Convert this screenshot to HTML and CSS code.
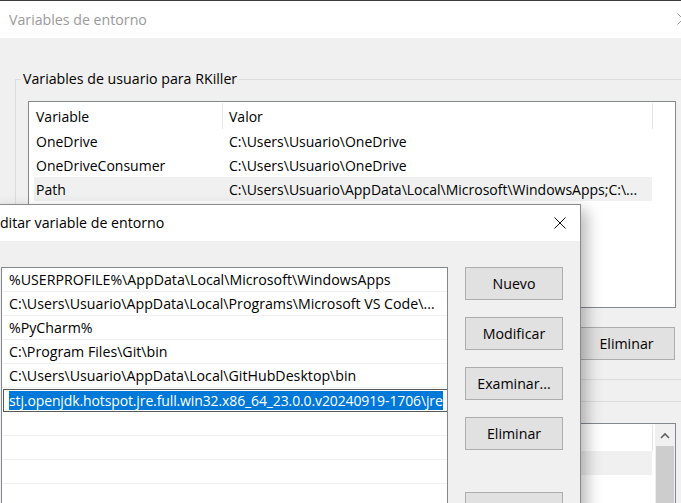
FILE: index.html
```html
<!DOCTYPE html>
<html lang="es">
<head>
<meta charset="utf-8">
<title>Variables de entorno</title>
<link rel="stylesheet" href="styles.css">
</head>
<body>
<div class="win">
  <div class="titlebar">
    <span class="title">Variables de entorno</span>
    <svg class="bg-close" width="12" height="12" viewBox="0 0 12 12"><path d="M0.5 0.5 L11.5 11.5 M11.5 0.5 L0.5 11.5" stroke="#9a9a9a" stroke-width="1" fill="none"/></svg>
  </div>
  <div class="win-body">
    <fieldset class="group">
      <legend>Variables de usuario para RKiller</legend>
      <div class="listview user-list">
        <div class="lv-header">
          <div class="hcell c1">Variable</div>
          <div class="hcell c2">Valor</div>
        </div>
        <div class="lv-row"><div class="cell c1">OneDrive</div><div class="cell c2">C:\Users\Usuario\OneDrive</div></div>
        <div class="lv-row"><div class="cell c1">OneDriveConsumer</div><div class="cell c2">C:\Users\Usuario\OneDrive</div></div>
        <div class="lv-row sel"><div class="cell c1">Path</div><div class="cell c2">C:\Users\Usuario\AppData\Local\Microsoft\WindowsApps;C:\...</div></div>
      </div>
      <div class="btn-row">
        <button class="btn">Eliminar</button>
      </div>
    </fieldset>
    <fieldset class="group sys">
      <div class="listview sys-list">
        <div class="lv-main">
          <div class="lv-header">
            <div class="hcell c1"></div>
            <div class="hcell c2"></div>
          </div>
          <div class="lv-row sel"><div class="cell c1"></div><div class="cell c2"></div></div>
          <div class="lv-row"><div class="cell c1"></div><div class="cell c2"></div></div>
        </div>
        <div class="scrollbar">
          <div class="sb-arrow"><svg width="10" height="7" viewBox="0 0 10 7"><path d="M1 6 L5 2 L9 6" stroke="#606060" stroke-width="1.6" fill="none"/></svg></div>
          <div class="sb-thumb"></div>
        </div>
      </div>
    </fieldset>
  </div>
</div>

<div class="dialog">
  <div class="dlg-titlebar">
    <span class="dlg-title">Editar variable de entorno</span>
    <svg class="dlg-close" width="12" height="12" viewBox="0 0 12 12"><path d="M0.5 0.5 L11.5 11.5 M11.5 0.5 L0.5 11.5" stroke="#111" stroke-width="1" fill="none"/></svg>
  </div>
  <div class="dlg-body">
    <div class="path-list">
      <div class="p-row">%USERPROFILE%\AppData\Local\Microsoft\WindowsApps</div>
      <div class="p-row">C:\Users\Usuario\AppData\Local\Programs\Microsoft VS Code\...</div>
      <div class="p-row">%PyCharm%</div>
      <div class="p-row">C:\Program Files\Git\bin</div>
      <div class="p-row">C:\Users\Usuario\AppData\Local\GitHubDesktop\bin</div>
      <div class="p-row editing">
        <div class="edit-box"><div class="edit-text"><span class="edit-sel">stj.openjdk.hotspot.jre.full.win32.x86_64_23.0.0.v20240919-1706\jre</span></div></div>
      </div>
      <div class="p-row"></div>
      <div class="p-row"></div>
      <div class="p-row"></div>
      <div class="p-row"></div>
    </div>
    <div class="dlg-buttons">
      <button class="btn dbtn">Nuevo</button>
      <button class="btn dbtn">Modificar</button>
      <button class="btn dbtn">Examinar...</button>
      <button class="btn dbtn">Eliminar</button>
      <button class="btn dbtn extra"></button>
    </div>
  </div>
</div>
</body>
</html>
```

FILE: styles.css
```css
html, body {
  margin: 0;
  padding: 0;
  overflow: hidden;
  width: 681px;
  height: 503px;
}
body {
  position: relative;
  background: #f0f0f0;
  font-family: "Open Sans", "Noto Sans", sans-serif;
  font-size: 14px;
  color: #000;
}
.win {
  width: 681px;
}
.titlebar {
  height: 37px;
  border-top: 1px solid #3a3a3a;
  background: #fff;
  display: flex;
  align-items: center;
  justify-content: space-between;
  padding-left: 9px;
  overflow: hidden;
}
.title {
  color: #9a9a9a;
  font-size: 14.2px;
  line-height: 20px;
}
.bg-close {
  flex: none;
  margin-right: -8px;
  margin-top: -1px;
}
.win-body {
  padding-top: 31px;
}
.group {
  margin: 0 0 0 15px;
  padding: 0 12px 19px 12px;
  border: 1px solid #dcdcdc;
  width: 648px;
  min-width: 0;
}
.group legend {
  padding: 0 2px;
  margin-left: -7px;
  line-height: 20px;
  font-size: 14.2px;
}
.group.sys {
  margin-top: 21px;
  padding-top: 9px;
}
.listview {
  margin-top: 12px;
  border: 1px solid #828790;
  background: #fff;
  overflow: hidden;
}
.group.sys .listview {
  margin-top: 12px;
}
.user-list {
  height: 205px;
}
.sys-list {
  display: flex;
  height: 120px;
}
.lv-main {
  flex: 1;
  min-width: 0;
}
.lv-header {
  display: flex;
  height: 27px;
  padding-top: 3px;
  box-sizing: border-box;
}
.hcell {
  line-height: 24px;
  border-right: 1px solid #e5e5e5;
  white-space: nowrap;
  box-sizing: border-box;
  margin-top: -2px;
  padding-top: 2px;
}
.hcell.c1 {
  padding-left: 7px;
  width: 194px;
}
.hcell.c2 {
  width: 430px;
  padding-left: 6px;
}
.lv-row {
  display: flex;
  margin-left: 5px;
  width: 618px;
  height: 24px;
  box-sizing: border-box;
  padding-top: 1px;
  line-height: 23px;
  white-space: nowrap;
}
.lv-row.sel {
  background: #f0f0f0;
}
.cell.c1 {
  width: 189px;
  padding-left: 2px;
  box-sizing: border-box;
  flex: none;
}
.cell.c2 {
  padding-left: 6px;
  overflow: hidden;
}
.btn-row {
  display: flex;
  justify-content: flex-end;
  margin-top: 19px;
  margin-right: 1px;
}
.btn {
  width: 97px;
  height: 33px;
  background: #e1e1e1;
  border: 1px solid #adadad;
  font-family: inherit;
  font-size: 14.2px;
  color: #000;
  padding: 0;
  box-sizing: border-box;
}
.scrollbar {
  width: 20px;
  flex: none;
  margin-left: 1px;
  background: #f0f0f0;
  display: flex;
  flex-direction: column;
}
.sb-arrow {
  height: 22px;
  display: flex;
  align-items: center;
  justify-content: center;
}
.sb-thumb {
  flex: 1;
  background: #cdcdcd;
  margin: 0 1px 0 1px;
}

/* foreground dialog (a window on the desktop) */
.dialog {
  position: absolute;
  left: -17px;
  top: 204px;
  width: 598px;
  height: 330px;
  box-sizing: border-box;
  border: 1px solid #8a8a8a;
  background: #f0f0f0;
  box-shadow: 10px 2px 14px -4px rgba(0, 0, 0, 0.28);
}
.dlg-titlebar {
  height: 36px;
  background: #fff;
  display: flex;
  align-items: center;
  justify-content: space-between;
  padding-left: 8px;
  padding-right: 14px;
}
.dlg-title {
  font-size: 14.2px;
  line-height: 20px;
}
.dlg-close {
  flex: none;
  margin-top: -1px;
}
.dlg-body {
  display: flex;
  gap: 17px;
  padding: 26px 17px 0 17px;
}
.path-list {
  width: 447px;
  height: 270px;
  box-sizing: border-box;
  border: 1px solid #828790;
  background: #fff;
  overflow: hidden;
  flex: none;
}
.p-row {
  height: 24px;
  box-sizing: border-box;
  border-bottom: 1px solid #f0f0f0;
  padding-left: 7px;
  line-height: 23px;
  white-space: nowrap;
  overflow: hidden;
  font-size: 14.2px;
}
.p-row.editing {
  border-bottom: none;
  padding-left: 1px;
  padding-top: 1px;
}
.edit-box {
  width: 460px;
  height: 23px;
  box-sizing: border-box;
  border: 1px solid #5a5a5a;
  padding: 0 0 0 5px;
  display: flex;
  align-items: center;
}
.edit-text {
  width: 438px;
  overflow: hidden;
  white-space: nowrap;
  flex: none;
}
.edit-sel {
  background: #0078d7;
  color: #fff;
  line-height: 19px;
  display: inline-block;
  font-size: 14px;
  letter-spacing: -0.12px;
}
.dlg-buttons {
  display: flex;
  flex-direction: column;
  gap: 17px;
  width: 98px;
  flex: none;
}
.dbtn {
  width: 98px;
}
.dbtn.extra {
  margin-top: 25px;
}
```
